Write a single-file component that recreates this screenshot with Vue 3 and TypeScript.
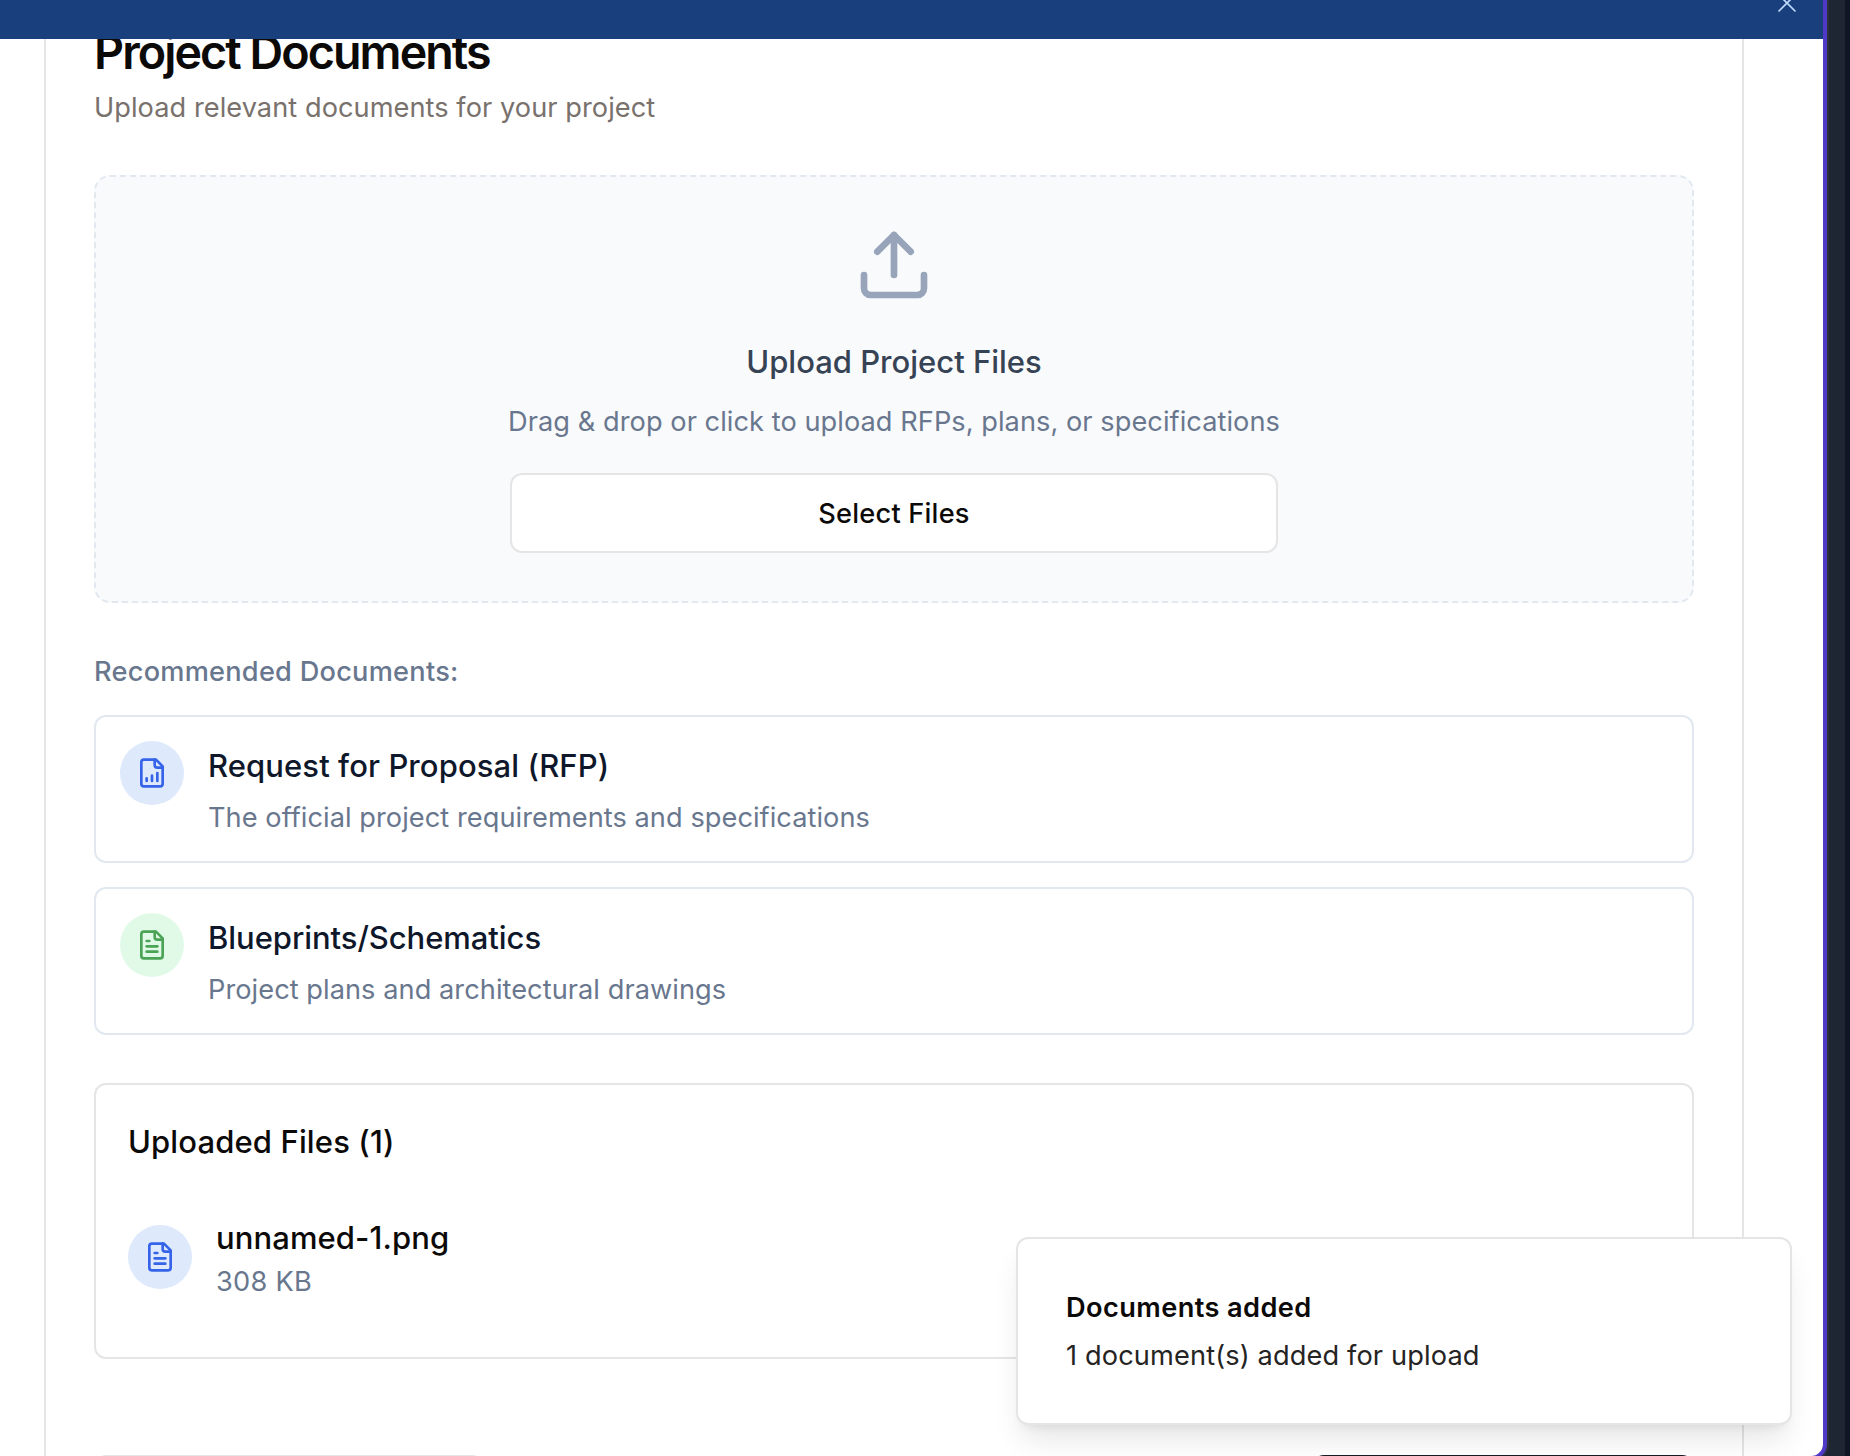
<script setup lang="ts">
interface RecommendedDoc {
  title: string
  description: string
  tone: 'blue' | 'green'
  icon: string[]
}

const outline = ['M15 2H6a2 2 0 0 0-2 2v16a2 2 0 0 0 2 2h12a2 2 0 0 0 2-2V7Z', 'M14 2v4a2 2 0 0 0 2 2h4']
const chartIcon = [...outline, 'M8 18v-2', 'M12 18v-4', 'M16 18v-6']
const textIcon = [...outline, 'M10 9H8', 'M16 13H8', 'M16 17H8']

const recommended: RecommendedDoc[] = [
  {
    title: 'Request for Proposal (RFP)',
    description: 'The official project requirements and specifications',
    tone: 'blue',
    icon: chartIcon,
  },
  {
    title: 'Blueprints/Schematics',
    description: 'Project plans and architectural drawings',
    tone: 'green',
    icon: textIcon,
  },
]

const files = [{ name: 'unnamed-1.png', size: '308 KB' }]
</script>

<template>
  <div class="page">
    <div class="modal">
      <header class="bar">
        <svg class="close" viewBox="0 0 24 24"><path d="M18 6 6 18M6 6l12 12" /></svg>
      </header>
      <main class="body">
        <section class="card">
          <h2 class="title">Project Documents</h2>
          <p class="subtitle small">Upload relevant documents for your project</p>

          <div class="dropzone">
            <svg class="upload" viewBox="0 0 24 24">
              <path d="M21 15v4a2 2 0 0 1-2 2H5a2 2 0 0 1-2-2v-4" />
              <path d="M17 8l-5-5-5 5" />
              <path d="M12 3v12" />
            </svg>
            <h3 class="drop-title">Upload Project Files</h3>
            <p class="drop-text small">Drag &amp; drop or click to upload RFPs, plans, or specifications</p>
            <button class="select">Select Files</button>
          </div>

          <h4 class="rec-heading">Recommended Documents:</h4>
          <div class="rec-list">
            <article v-for="doc in recommended" :key="doc.title" class="rec">
              <span class="badge" :class="doc.tone">
                <svg viewBox="0 0 24 24"><path v-for="d in doc.icon" :key="d" :d="d" /></svg>
              </span>
              <div class="rec-copy">
                <h5 class="rec-title" :class="doc.tone + '-title'">{{ doc.title }}</h5>
                <p class="rec-desc small">{{ doc.description }}</p>
              </div>
            </article>
          </div>

          <div class="uploads">
            <h4 class="up-title">Uploaded Files ({{ files.length }})</h4>
            <div v-for="file in files" :key="file.name" class="file">
              <span class="badge blue">
                <svg viewBox="0 0 24 24"><path v-for="d in textIcon" :key="d" :d="d" /></svg>
              </span>
              <div class="file-copy">
                <p class="file-name">{{ file.name }}</p>
                <p class="file-size small">{{ file.size }}</p>
              </div>
            </div>
          </div>

          <footer class="actions">
            <button class="action" aria-label="Back"></button>
            <button class="action dark" aria-label="Next"></button>
          </footer>
        </section>
      </main>
    </div>

    <div class="toast">
      <p class="toast-title">Documents added</p>
      <p class="toast-text small">1 document(s) added for upload</p>
    </div>
  </div>
</template>

<style>
body {
  margin: 0;
  background: #1e2533;
}
</style>

<style scoped>
.page {
  position: relative;
  width: 1850px;
  height: 1456px;
  overflow: hidden;
  box-sizing: border-box;
  background: #1e2533;
  border-right: 5px solid #0f1524;
  font-family: Inter, sans-serif;
  color: #0c0a09;
}
.page * {
  box-sizing: border-box;
}
h2, h3, h4, h5, p {
  margin: 0;
  white-space: nowrap;
}
svg {
  display: block;
  fill: none;
  stroke: currentColor;
  stroke-width: 2;
  stroke-linecap: round;
  stroke-linejoin: round;
}
.small {
  font-size: 27.2px;
  line-height: 40px;
  letter-spacing: 0.05px;
}
.modal {
  width: 1827px;
  height: 1460px;
  background: #fff;
  border-right: 4px solid #4f39c6;
  border-bottom: 4px solid #4f39c6;
  border-bottom-right-radius: 16px;
  box-shadow: 0 0 0 2px #2b303d;
  overflow: hidden;
}
.bar {
  display: flex;
  justify-content: flex-end;
  height: 39px;
  padding-right: 20px;
  background: #193f7d;
  color: #bfdbfe;
}
.close {
  width: 32px;
  height: 32px;
  margin-top: -13px;
  stroke-width: 1.3;
}
.body {
  height: 1417px;
  padding: 0 79px 0 44px;
  overflow: hidden;
}
.card {
  height: 1480px;
  padding: 0 48px;
  border: solid #e5e5e5;
  border-width: 0 2px;
}
.title {
  height: 48px;
  margin-top: -11px;
  font-size: 46.6px;
  line-height: 48px;
  font-weight: 600;
  letter-spacing: -1.92px;
}
.subtitle {
  margin-top: 12px;
  color: #78716c;
}
.dropzone {
  display: flex;
  flex-direction: column;
  align-items: center;
  height: 428px;
  margin-top: 47px;
  padding-top: 48px;
  border: 2px dashed #e2e8f0;
  border-radius: 16px;
  background: #f9fafc;
}
.upload {
  width: 80px;
  height: 80px;
  color: #97a4b9;
}
.drop-title {
  margin-top: 33px;
  font-size: 31px;
  line-height: 48px;
  font-weight: 500;
  color: #364354;
}
.drop-text {
  margin-top: 16px;
  color: #69778e;
}
.select {
  width: 768px;
  height: 80px;
  margin-top: 31px;
  padding: 2px 0 0;
  border: 2px solid #e5e5e5;
  border-radius: 12px;
  background: #fff;
  font: 500 27.2px/40px Inter, sans-serif;
  letter-spacing: 0.2px;
  color: #0c0a09;
}
.rec-heading {
  margin-top: 49px;
  font-size: 27.2px;
  line-height: 40px;
  font-weight: 500;
  letter-spacing: 0.24px;
  color: #69778e;
}
.rec-list {
  display: flex;
  flex-direction: column;
  gap: 24px;
  margin-top: 23px;
}
.rec {
  display: flex;
  gap: 24px;
  height: 148px;
  padding: 24px;
  border: 2px solid #e2e8f0;
  border-radius: 12px;
}
.rec-copy {
  padding-top: 1px;
}
.badge {
  display: flex;
  flex: none;
  align-items: center;
  justify-content: center;
  width: 64px;
  height: 64px;
  border-radius: 50%;
}
.badge svg {
  width: 32px;
  height: 32px;
}
.blue {
  background: #dee9fc;
  color: #3563e9;
}
.green {
  background: #e1fae8;
  color: #4aa356;
}
.rec-title {
  font-size: 31px;
  line-height: 48px;
  font-weight: 500;
  color: #0f172a;
}
.blue-title {
  letter-spacing: 0.09px;
}
.green-title {
  letter-spacing: -0.06px;
}
.rec-desc {
  margin-top: 8px;
  color: #69778e;
}
.uploads {
  height: 276px;
  margin-top: 48px;
  padding: 33px 32px 0;
  border: 2px solid #e5e5e5;
  border-radius: 12px;
}
.up-title {
  font-size: 31px;
  line-height: 48px;
  font-weight: 500;
  letter-spacing: 0.13px;
}
.file {
  display: flex;
  align-items: center;
  gap: 24px;
  height: 88px;
  margin-top: 47px;
}
.file-copy {
  padding-top: 2px;
}
.file-name {
  font-size: 31px;
  line-height: 48px;
  font-weight: 500;
  letter-spacing: 0.09px;
}
.file-size {
  letter-spacing: 0.25px;
  color: #69778e;
}
.actions {
  display: flex;
  justify-content: space-between;
  margin-top: 96px;
}
.action {
  width: 390px;
  height: 80px;
  border: 2px solid #e5e5e5;
  border-radius: 12px;
  background: #fff;
}
.dark {
  width: 382px;
  border-color: #171c26;
  background: #171c26;
}
.toast {
  position: absolute;
  left: 1016px;
  top: 1237px;
  width: 776px;
  height: 188px;
  padding: 49px 48px 0;
  border: 2px solid #e5e5e5;
  border-radius: 12px;
  background: #fff;
  box-shadow: 0 20px 30px -6px rgba(0, 0, 0, 0.1), 0 8px 12px -8px rgba(0, 0, 0, 0.1);
}
.toast-title {
  font-size: 27.2px;
  line-height: 40px;
  font-weight: 600;
  letter-spacing: 0.4px;
}
.toast-text {
  margin-top: 8px;
  letter-spacing: 0.13px;
  color: #252423;
}
</style>
